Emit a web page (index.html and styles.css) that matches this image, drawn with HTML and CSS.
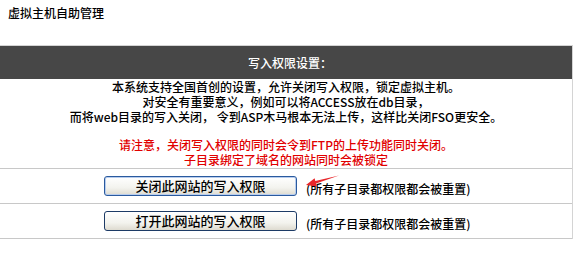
FILE: index.html
```html
<!DOCTYPE html>
<html>
<head>
    <meta charset="utf-8">
    <link rel="stylesheet" href="styles.css">
</head>
<body>
<div class="title">虚拟主机自助管理</div>

<div class="panel">
    <div class="panel-head">写入权限设置：</div>

    <div class="intro">
        <p>本系统支持全国首创的设置，允许关闭写入权限，锁定虚拟主机。</p>
        <p>对安全有重要意义，例如可以将ACCESS放在db目录，</p>
        <p>而将web目录的写入关闭， 令到ASP木马根本无法上传，这样比关闭FSO更安全。</p>
        <div class="warn">
            <p>请注意，关闭写入权限的同时会令到FTP的上传功能同时关闭。</p>
            <p>子目录绑定了域名的网站同时会被锁定</p>
        </div>
    </div>

    <div class="row">
        <button class="btn btn-default">关闭此网站的写入权限</button>
        <span class="note">(所有子目录都权限都会被重置)</span>
        <svg class="arrow" width="38" height="14" viewBox="0 0 38 14">
            <polygon points="2,11 10.6,4.2 11.3,7 35,1.5 12,9.4 13,12.4" fill="#e8262a"/>
        </svg>
    </div>

    <div class="row">
        <button class="btn">打开此网站的写入权限</button>
        <span class="note">(所有子目录都权限都会被重置)</span>
    </div>
</div>
</body>
</html>
```

FILE: styles.css
```css
body {
    margin: 0;
    background: #fff;
    font-family: "Noto Sans CJK SC", "DejaVu Sans", sans-serif;
    font-size: 12px;
    font-weight: 500;
    color: #000;
}

p {
    margin: 0;
}

.title {
    padding: 5px 8px 0;
    line-height: 15px;
    height: 20px;
    margin-bottom: 20px;
}

.panel {
    width: 572px;
    border-top: 1px solid #d4d4d4;
    border-right: 1px solid #d4d4d4;
}

.panel-head {
    height: 33px;
    line-height: 33px;
    padding-left: 8px;
    background: #474747;
    color: #fff;
    text-align: center;
}

.intro {
    text-align: center;
    line-height: 15px;
    padding-bottom: 1px;
    border-bottom: 1px solid #c8c8c8;
}

.warn {
    margin-top: 13px;
    color: #e10000;
}

.row {
    position: relative;
    display: flex;
    align-items: flex-end;
    height: 20px;
    padding: 7px 0 7px 104px;
    border-bottom: 1px solid #c8c8c8;
}

.btn {
    width: 193px;
    height: 20px;
    padding: 0;
    border: 1px solid #1d3b66;
    border-radius: 3px;
    background: linear-gradient(#ffffff, #f3f3ee 60%, #dedbd0);
    font-family: "Noto Sans CJK SC", sans-serif;
    font-size: 13px;
    font-weight: 500;
    line-height: 18px;
    color: #000;
}

.btn-default {
    border-color: #2a5a9e;
    box-shadow: inset 0 0 0 1px #b8cdee;
}

.note {
    margin-left: 9px;
    line-height: 15px;
}

.arrow {
    position: absolute;
    left: 304px;
    top: 5px;
}
```
